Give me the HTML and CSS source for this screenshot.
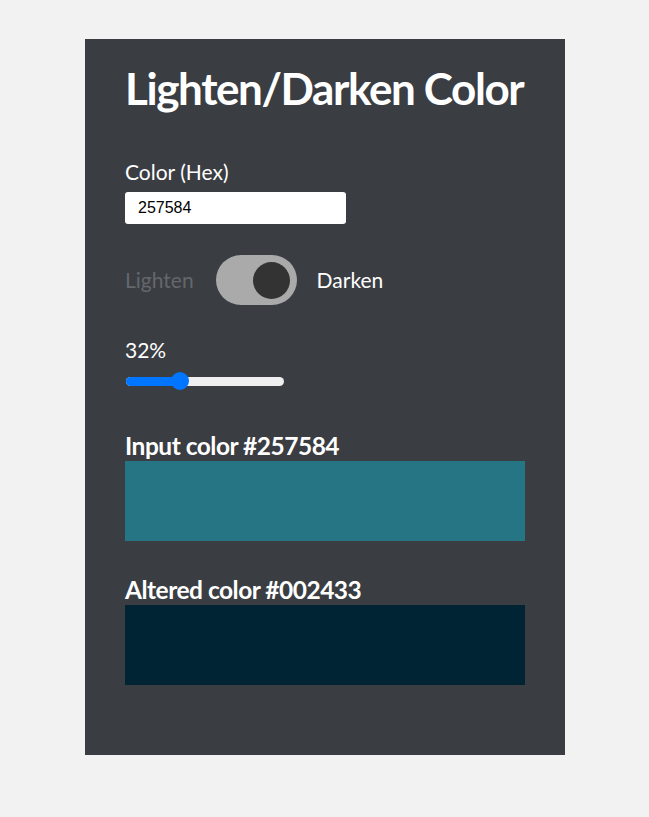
FILE: index.html
```html
<!DOCTYPE html>
<html lang="en">
<head>
<meta charset="utf-8">
<title>Lighten/Darken Color</title>
<link rel="stylesheet" href="styles.css">
</head>
<body>
<main class="panel">
  <h1 class="title">Lighten/Darken Color</h1>
  <label class="field-label" for="hex">Color (Hex)</label>
  <input id="hex" class="hex-input" type="text" value="257584">
  <div class="toggle-row">
    <span class="mode mode-off">Lighten</span>
    <span class="toggle"><span class="knob"></span></span>
    <span class="mode mode-on">Darken</span>
  </div>
  <div class="amount">32%</div>
  <div class="slider">
    <span class="slider-fill"></span>
    <span class="slider-thumb"></span>
  </div>
  <h2 class="swatch-title">Input color #257584</h2>
  <div class="swatch swatch-input"></div>
  <h2 class="swatch-title swatch-title-2">Altered color #002433</h2>
  <div class="swatch swatch-altered"></div>
</main>
</body>
</html>
```

FILE: styles.css
```css
* { box-sizing: border-box; }
html, body { margin: 0; padding: 0; }
body {
  background: #f2f2f2;
  font-family: Lato, "Open Sans", sans-serif;
  color: #ffffff;
}
.panel {
  margin: 39px 0 0 85px;
  width: 480px;
  background: #3a3d42;
  padding: 19px 40px 70px 40px;
}
.title {
  margin: 0;
  font-size: 44px;
  line-height: 60px;
  font-weight: 700;
  letter-spacing: -1.4px;
  white-space: nowrap;
}
.field-label {
  display: block;
  margin-top: 42px;
  font-size: 21px;
  line-height: 24px;
}
.hex-input {
  display: block;
  margin-top: 8px;
  width: 221px;
  height: 32px;
  border: none;
  border-radius: 3px;
  background: #fff;
  padding: 0 13px;
  font-family: "Liberation Sans", Arial, sans-serif;
  font-size: 16px;
  color: #000;
}
.toggle-row {
  display: flex;
  align-items: center;
  margin-top: 31px;
  height: 50px;
}
.mode {
  font-size: 21px;
  line-height: 24px;
}
.mode-off { color: #64676c; }
.mode-on { color: #ffffff; }
.toggle {
  display: flex;
  align-items: center;
  justify-content: flex-end;
  width: 81px;
  height: 50px;
  margin: 0 20px 0 22px;
  padding: 0 7px;
  border-radius: 25px;
  background: #aaaaaa;
}
.knob {
  width: 37px;
  height: 37px;
  border-radius: 50%;
  background: #333333;
}
.amount {
  margin-top: 33px;
  font-size: 21px;
  line-height: 24px;
}
.slider {
  position: relative;
  margin-top: 10px;
  width: 160px;
  height: 18px;
}
.slider::before {
  content: "";
  position: absolute;
  left: 1px;
  right: 1px;
  top: 5px;
  height: 9px;
  border-radius: 5px;
  background: #efefef;
}
.slider-fill {
  position: absolute;
  left: 1px;
  top: 5px;
  width: 55px;
  height: 9px;
  border-radius: 5px 0 0 5px;
  background: #0075ff;
}
.slider-thumb {
  position: absolute;
  left: 46px;
  top: 0;
  width: 18px;
  height: 18px;
  border-radius: 50%;
  background: #0075ff;
}
.swatch-title {
  margin: 40px 0 0 0;
  font-size: 24.5px;
  line-height: 31px;
  font-weight: 700;
  letter-spacing: -0.5px;
}
.swatch-title-2 { margin-top: 33px; }
.swatch {
  width: 400px;
  height: 80px;
}
.swatch-input { background: #257584; }
.swatch-altered { background: #002433; }
```
